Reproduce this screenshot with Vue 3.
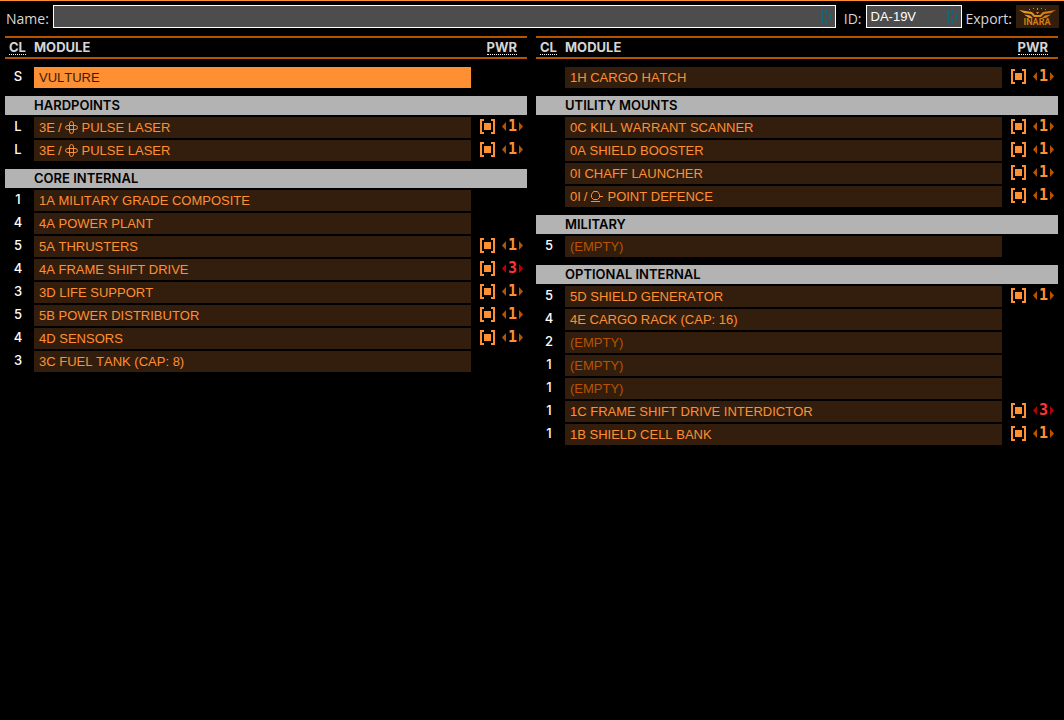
<script setup>
import { ref } from "vue";

const shipName = ref("");
const shipId = ref("DA-19V");

const columns = ref([
  [
    { slots: [{ cl: "S", name: "Vulture", hull: true }] },
    {
      title: "Hardpoints",
      slots: [
        { cl: "L", rating: "3E", mount: "gimbal", name: "Pulse Laser", priority: 1 },
        { cl: "L", rating: "3E", mount: "gimbal", name: "Pulse Laser", priority: 1 },
      ],
    },
    {
      title: "Core Internal",
      slots: [
        { cl: "1", name: "1A Military Grade Composite" },
        { cl: "4", name: "4A Power Plant" },
        { cl: "5", name: "5A Thrusters", priority: 1 },
        { cl: "4", name: "4A Frame Shift Drive", priority: 3 },
        { cl: "3", name: "3D Life Support", priority: 1 },
        { cl: "5", name: "5B Power Distributor", priority: 1 },
        { cl: "4", name: "4D Sensors", priority: 1 },
        { cl: "3", name: "3C Fuel Tank (Cap: 8)" },
      ],
    },
  ],
  [
    { slots: [{ cl: "", name: "1H Cargo Hatch", priority: 1 }] },
    {
      title: "Utility Mounts",
      slots: [
        { cl: "", name: "0C Kill Warrant Scanner", priority: 1 },
        { cl: "", name: "0A Shield Booster", priority: 1 },
        { cl: "", name: "0I Chaff Launcher", priority: 1 },
        { cl: "", rating: "0I", mount: "turret", name: "Point Defence", priority: 1 },
      ],
    },
    {
      title: "Military",
      slots: [{ cl: "5", name: "(Empty)", empty: true }],
    },
    {
      title: "Optional Internal",
      slots: [
        { cl: "5", name: "5D Shield Generator", priority: 1 },
        { cl: "4", name: "4E Cargo Rack (Cap: 16)" },
        { cl: "2", name: "(Empty)", empty: true },
        { cl: "1", name: "(Empty)", empty: true },
        { cl: "1", name: "(Empty)", empty: true },
        { cl: "1", name: "1C Frame Shift Drive Interdictor", priority: 3 },
        { cl: "1", name: "1B Shield Cell Bank", priority: 1 },
      ],
    },
  ],
]);

const changePriority = (slot, step) => {
  slot.priority = Math.min(5, Math.max(1, slot.priority + step));
};
</script>

<template>
  <main class="outfitting">
    <form class="ship-bar" @submit.prevent>
      <label for="ship-name">Name:</label>
      <span class="field field-name">
        <input id="ship-name" v-model="shipName" type="text" />
        <svg class="fill-icon" viewBox="0 0 11 14" aria-hidden="true">
          <path d="M0 0h2v13h-2zM4 0h2v3h-2zM4 9h2v4h-2zM8 3h2v7h-2z" />
        </svg>
      </span>
      <label for="ship-id" class="label-id">ID:</label>
      <span class="field field-id">
        <input id="ship-id" v-model="shipId" type="text" />
        <svg class="fill-icon" viewBox="0 0 11 14" aria-hidden="true">
          <path d="M0 0h2v13h-2zM4 0h2v3h-2zM4 9h2v4h-2zM8 3h2v7h-2z" />
        </svg>
      </span>
      <span>Export:</span>
      <button type="button" class="export" aria-label="Export to Inara">
        <svg viewBox="0 0 43 23" aria-hidden="true">
          <defs>
            <linearGradient id="gold" x1="0" x2="1" y1="0" y2="0">
              <stop offset="0" stop-color="#f0a51e" />
              <stop offset="1" stop-color="#cc7010" />
            </linearGradient>
          </defs>
          <g fill="url(#gold)">
            <path d="M3 5l13 2 3 3h5l3-3 13-2-5 3-7 1-3 3h-7l-3-3-7-1z" />
            <path d="M8 9.500l6 1 3 2.500h-4zM35 9.500l-6 1-3 2.500h4zM20 7h3l-1.500 2z" />
            <path d="M13 4h1v1h-1zM17 3h1v1h-1zM21 3h1v2h-1zM25 3h1v1h-1zM29 4h1v1h-1z" />
          </g>
          <text x="21" y="20" text-anchor="middle">INARA</text>
        </svg>
      </button>
    </form>

    <div class="columns">
      <table v-for="(groups, c) in columns" :key="c">
        <colgroup>
          <col class="col-class" />
          <col />
          <col class="col-power" />
        </colgroup>
        <thead>
          <tr>
            <th scope="col"><abbr title="Class">CL</abbr></th>
            <th scope="col">Module</th>
            <th scope="col" class="head-power"><abbr title="Power">PWR</abbr></th>
          </tr>
        </thead>
        <tbody v-for="(group, g) in groups" :key="g">
          <tr v-if="group.title">
            <th colspan="3" scope="colgroup">
              <div class="section">{{ group.title }}</div>
            </th>
          </tr>
          <tr v-for="(slot, s) in group.slots" :key="s">
            <td class="class">{{ slot.cl }}</td>
            <td>
              <div class="module" :class="{ hull: slot.hull, empty: slot.empty }">
                <template v-if="slot.mount">
                  <span>{{ slot.rating }}</span>
                  <span class="slash">/</span>
                  <svg v-if="slot.mount === 'gimbal'" class="mount" viewBox="0 0 13 13" aria-hidden="true">
                    <path d="M4.5 8.500V3Q4.5 .5 6.5 .5T8.5 3V10Q8.5 12.5 6.5 12.5T4.5 10Z" />
                    <path d="M8.5 4.500H3Q.5 4.5 .5 6.5T3 8.5H10Q12.5 8.5 12.5 6.5T10 4.5Z" />
                  </svg>
                  <svg v-else class="mount" viewBox="0 0 13 13" aria-hidden="true">
                    <path d="M3.500 9.500l-2-2v-3l2-3h4l2 3v3l-2 2zM9.500 6.500h3.500M1 11.500h9" />
                  </svg>
                </template>
                <span>{{ slot.name }}</span>
              </div>
            </td>
            <td>
              <div v-if="slot.priority" class="power" :class="{ low: slot.priority === 3 }">
                <button type="button" class="toggle" aria-label="Toggle power">
                  <svg viewBox="0 0 15 15" aria-hidden="true">
                    <path d="M0 0h4v2h-2v11h2v2h-4zM15 0h-4v2h2v11h-2v2h4zM4 4h7v7h-7z" />
                  </svg>
                </button>
                <span class="priority">
                  <button type="button" aria-label="Raise priority" @click="changePriority(slot, -1)">
                    <svg viewBox="0 0 4 9" aria-hidden="true"><path d="M4 0v9l-4-4.500z" /></svg>
                  </button>
                  <span>{{ slot.priority }}</span>
                  <button type="button" aria-label="Lower priority" @click="changePriority(slot, 1)">
                    <svg viewBox="0 0 4 9" aria-hidden="true"><path d="M0 0v9l4-4.500z" /></svg>
                  </button>
                </span>
              </div>
            </td>
          </tr>
        </tbody>
      </table>
    </div>
  </main>
</template>

<style>
body {
  background: #000;
}
</style>

<style scoped>
.outfitting {
  box-sizing: border-box;
  border-top: 1px solid #ff8f33;
  padding: 4px 5px 0;
  color: #fff;
  font-family: Inter, sans-serif;
  font-size: 13px;
}
button {
  display: block;
  border: 0;
  padding: 0;
  background: none;
  cursor: pointer;
}
svg {
  display: block;
}
.ship-bar {
  display: flex;
  align-items: center;
  gap: 4px;
  height: 23px;
  padding-left: 1px;
  color: #d6d6d6;
  font-family: "Open Sans", sans-serif;
  font-size: 14px;
  line-height: 23px;
}
.ship-bar > label,
.ship-bar > span {
  padding-top: 4px;
}
.ship-bar > .field {
  position: relative;
  padding: 0;
}
.field-name {
  flex: 1;
}
.field-id {
  width: 96px;
}
.label-id {
  margin-left: 4px;
}
input {
  display: block;
  box-sizing: border-box;
  width: 100%;
  height: 23px;
  border: 1px solid #fff;
  padding: 0 24px 0 4px;
  background: #4d4d4d;
  color: #fff;
  font-family: "Liberation Sans", sans-serif;
  font-size: 13px;
  font-kerning: none;
}
.fill-icon {
  position: absolute;
  top: 5px;
  right: 4px;
  width: 11px;
  height: 14px;
  fill: #10687c;
}
.export {
  width: 43px;
  height: 23px;
  background: #331e0d;
}
.export text {
  fill: #d07a12;
  font-family: Roboto, sans-serif;
  font-size: 9px;
  font-weight: bold;
}
.columns {
  display: grid;
  grid-template-columns: 1fr 1fr;
  gap: 9px;
  align-items: start;
  margin: 8px 1px 0 0;
}
table {
  width: 100%;
  table-layout: fixed;
  border-spacing: 0;
  text-transform: uppercase;
}
.col-class {
  width: 29px;
}
.col-power {
  width: 56px;
}
th,
td {
  padding: 2px 0 0;
  text-align: left;
  vertical-align: top;
}
tbody tr:first-child > * {
  padding-top: 8px;
}
thead th {
  height: 19px;
  border: solid #b85300;
  border-width: 2px 0;
  padding: 0;
  color: #d6d6d6;
  line-height: 19px;
}
thead th:first-child {
  padding-left: 4px;
}
thead .head-power {
  padding-right: 10px;
  text-align: right;
}
abbr {
  display: inline-block;
  border-bottom: 1px dotted #fff;
  line-height: 14px;
  text-decoration: none;
}
.section {
  padding-left: 29px;
  background: #b3b3b3;
  color: #000;
  font-weight: 600;
  line-height: 19px;
}
td.class {
  padding-right: 3px;
  font-weight: 500;
  line-height: 19px;
  text-align: center;
}
.module {
  display: flex;
  align-items: center;
  height: 21px;
  padding-left: 5px;
  background: #331e0d;
  color: #ff8f33;
  font-family: "Liberation Sans", sans-serif;
  font-kerning: none;
}
.module.hull {
  background: #ff8f33;
  color: #331e0d;
}
.module.empty {
  color: #b85300;
}
.slash {
  padding: 0 3px;
}
.mount {
  width: 13px;
  height: 13px;
  margin-right: 4px;
  fill: none;
  stroke: #ff8f33;
}
.power {
  display: flex;
  align-items: center;
  gap: 7px;
  padding-left: 9px;
  color: #ff8f33;
}
.toggle svg {
  width: 15px;
  height: 15px;
  fill: #ff8f33;
}
.priority {
  display: flex;
  align-items: center;
  justify-content: space-between;
  width: 21px;
  font: bold 15px/19px "DejaVu Sans Mono", monospace;
}
.priority svg {
  width: 4px;
  height: 9px;
  fill: #b85300;
}
.low .priority {
  color: #ff3333;
}
.low .priority svg {
  fill: #b80000;
}
</style>
